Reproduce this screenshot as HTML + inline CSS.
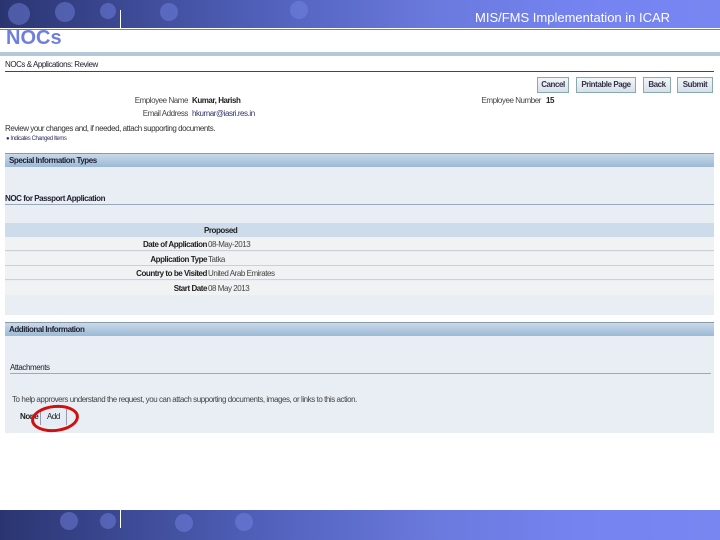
<!DOCTYPE html>
<html><head><meta charset="utf-8"><style>
*{margin:0;padding:0;box-sizing:border-box}
body{width:720px;height:540px;position:relative;background:#fff;font-family:"Liberation Sans",sans-serif;font-size:8px;letter-spacing:-0.45px;color:#222;overflow:hidden}
.a{position:absolute;white-space:nowrap}
.rt{position:absolute;white-space:nowrap;text-align:right}
.band{position:absolute;left:0;width:720px;background:linear-gradient(90deg,#2a3570 0%,#3d4a95 18%,#4f5fb8 35%,#6a79dc 60%,#7483f0 80%,#7886f2 100%)}
.dot{position:absolute;border-radius:50%;background:rgba(120,135,230,.45)}
.btn{position:absolute;top:77px;height:16px;border:1px solid #8aa;background:linear-gradient(#f2f6fa,#d6e0ea);color:#334;font-weight:bold;text-align:center;line-height:14px}
.sh{position:absolute;left:5px;width:709px;height:14px;background:linear-gradient(#c9d9e8,#9bbad6);border-top:1px solid #89a;font-weight:bold;padding-left:4px;line-height:13px;color:#223}
.panel{position:absolute;left:5px;width:709px;background:#e9eef4}
.r{position:absolute;left:5px;width:709px;height:14px;border-bottom:1px solid #c9d0d8;background:#f1f2f3}
.r .l{position:absolute;right:507px;font-weight:bold;line-height:15px;color:#222}
.r .v{position:absolute;left:203px;line-height:15px;color:#444}
</style></head><body>
<div class="band" style="top:0;height:28px"></div>
<div class="dot" style="left:8px;top:3px;width:22px;height:22px"></div>
<div class="dot" style="left:55px;top:2px;width:20px;height:20px"></div>
<div class="dot" style="left:100px;top:3px;width:16px;height:16px"></div>
<div class="dot" style="left:160px;top:3px;width:18px;height:18px"></div>
<div class="dot" style="left:290px;top:1px;width:18px;height:18px"></div>
<div class="a" style="left:120px;top:10px;width:1px;height:18px;background:#fff"></div>
<div class="a" style="left:0;top:29px;width:720px;height:1px;background:#6a78d8"></div>
<div class="a" style="left:475px;top:10px;font-size:13px;letter-spacing:0;color:#fff">MIS/FMS Implementation in ICAR</div>
<div class="a" style="left:6px;top:27px;font-size:20px;letter-spacing:0;font-weight:bold;color:#6f7fe0">NOCs</div>
<div class="a" style="left:0;top:52px;width:720px;height:4px;background:#b4c8da"></div>
<div class="a" style="left:5px;top:60px;color:#223">NOCs &amp; Applications: Review</div>
<div class="a" style="left:5px;top:71px;width:709px;height:1px;background:#445"></div>
<div class="btn" style="left:537px;width:32px">Cancel</div>
<div class="btn" style="left:576px;width:60px">Printable Page</div>
<div class="btn" style="left:643px;width:28px">Back</div>
<div class="btn" style="left:677px;width:36px">Submit</div>
<div class="rt" style="right:532px;top:96px;color:#444">Employee Name</div>
<div class="a" style="left:192px;top:96px;font-weight:bold">Kumar, Harish</div>
<div class="rt" style="right:532px;top:109px;color:#444">Email Address</div>
<div class="a" style="left:192px;top:109px;color:#336">hkumar@iasri.res.in</div>
<div class="rt" style="right:179px;top:96px;color:#444">Employee Number</div>
<div class="a" style="left:546px;top:96px;font-weight:bold">15</div>
<div class="a" style="left:5px;top:124px;color:#333">Review your changes and, if needed, attach supporting documents.</div>
<div class="a" style="left:6px;top:136px;font-size:6px;color:#336">&#9679; Indicates Changed Items</div>
<div class="sh" style="top:153px">Special Information Types</div>
<div class="panel" style="top:167px;height:148px"></div>
<div class="a" style="left:5px;top:194px;font-weight:bold;color:#223">NOC for Passport Application</div>
<div class="a" style="left:5px;top:204px;width:709px;height:1px;background:#98aabb"></div>
<div class="a" style="left:5px;top:223px;width:709px;height:14px;background:#cddbea;font-weight:bold;line-height:15px;padding-left:199px">Proposed</div>
<div class="r" style="top:237px"><span class="l">Date of Application</span><span class="v">08-May-2013</span></div>
<div class="r" style="top:252px"><span class="l">Application Type</span><span class="v">Tatka</span></div>
<div class="r" style="top:266px"><span class="l">Country to be Visited</span><span class="v">United Arab Emirates</span></div>
<div class="r" style="top:281px;border-bottom:none"><span class="l">Start Date</span><span class="v">08 May 2013</span></div>
<div class="sh" style="top:322px">Additional Information</div>
<div class="panel" style="top:336px;height:97px"></div>
<div class="a" style="left:10px;top:363px;color:#223">Attachments</div>
<div class="a" style="left:10px;top:373px;width:701px;height:1px;background:#98aabb"></div>
<div class="a" style="left:12px;top:395px;color:#444">To help approvers understand the request, you can attach supporting documents, images, or links to this action.</div>
<div class="a" style="left:20px;top:412px;font-weight:bold">None</div>
<div class="a" style="left:40px;top:409px;width:27px;height:16px;background:#e4edf5;border-left:1px solid #99a;border-right:1px solid #99a;text-align:center;line-height:16px">Add</div>
<div class="a" style="left:31px;top:405px;width:48px;height:27px;border:3px solid #d01010;border-radius:50%;transform:rotate(-6deg)"></div>
<div class="band" style="top:510px;height:30px"></div>
<div class="dot" style="left:60px;top:512px;width:18px;height:18px"></div>
<div class="dot" style="left:100px;top:513px;width:16px;height:16px"></div>
<div class="dot" style="left:175px;top:514px;width:18px;height:18px"></div>
<div class="dot" style="left:235px;top:513px;width:18px;height:18px"></div>
<div class="a" style="left:120px;top:510px;width:1px;height:18px;background:#fff"></div>
</body></html>
